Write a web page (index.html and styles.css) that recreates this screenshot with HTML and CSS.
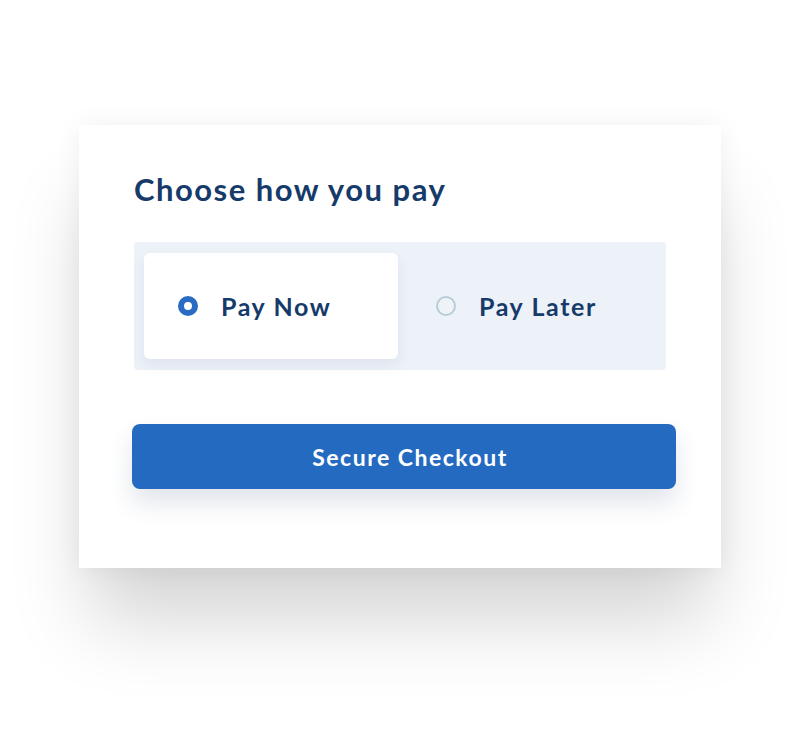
FILE: index.html
```html
<!DOCTYPE html>
<html>
<head>
<meta charset="utf-8">
<link rel="stylesheet" href="styles.css">
</head>
<body>
<div class="card">
  <h1 class="title">Choose how you pay</h1>
  <div class="toggle">
    <div class="option selected">
      <span class="radio on"></span>
      <span class="label">Pay Now</span>
    </div>
    <div class="option later">
      <span class="radio"></span>
      <span class="label">Pay Later</span>
    </div>
  </div>
  <button class="checkout">Secure Checkout</button>
</div>
</body>
</html>
```

FILE: styles.css
```css
html, body {
  margin: 0;
  padding: 0;
  background: #ffffff;
}
body {
  font-family: Lato, "Noto Sans", sans-serif;
  padding-top: 125px;
  height: 746px;
  box-sizing: border-box;
  overflow: hidden;
}
.card {
  margin-left: 79px;
  width: 642px;
  height: 443px;
  box-sizing: border-box;
  background: #fff;
  padding: 46px 45px 0 55px;
  box-shadow: 0 62px 74px -10px rgba(0, 0, 0, 0.17), 0 0 24px rgba(0, 0, 0, 0.06);
}
.title {
  margin: 0 0 35px 0;
  font-size: 31px;
  line-height: 36px;
  font-weight: 700;
  color: #163b6a;
  letter-spacing: 1.5px;
}
.toggle {
  width: 532px;
  height: 128px;
  box-sizing: border-box;
  padding: 11px 10px;
  background: #edf2f8;
  border-radius: 4px;
  display: grid;
  grid-template-columns: 254px 1fr;
}
.option {
  display: flex;
  align-items: center;
  padding-left: 34px;
  gap: 23px;
  border-radius: 6px;
}
.option.selected {
  background: #fff;
  box-shadow: 0 6px 14px rgba(40, 70, 110, 0.08);
}
.option.later {
  padding-left: 38px;
}
.radio {
  width: 20px;
  height: 20px;
  box-sizing: border-box;
  border-radius: 50%;
  border: 2px solid #b9ccd6;
  background: #eef3f8;
  flex: none;
}
.radio.on {
  border: 6px solid #2a6cc4;
  background: #fff;
}
.label {
  font-size: 25px;
  font-weight: 700;
  color: #163b6a;
  letter-spacing: 1.6px;
}
.checkout {
  display: block;
  margin: 54px 0 0 -2px;
  padding: 0 0 0 12px;
  width: 544px;
  height: 65px;
  border: none;
  border-radius: 8px;
  background: #256ac1;
  color: #fff;
  font-family: Lato, "Noto Sans", sans-serif;
  font-size: 23px;
  font-weight: 700;
  letter-spacing: 1.5px;
  box-shadow: 0 14px 24px rgba(40, 70, 110, 0.14);
}
```
